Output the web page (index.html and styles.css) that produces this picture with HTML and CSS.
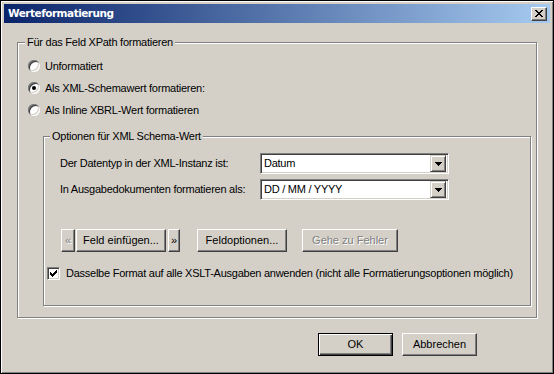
FILE: index.html
```html
<!DOCTYPE html>
<html lang="de">
<head>
    <meta charset="UTF-8">
    <title>Werteformatierung</title>
    <link rel="stylesheet" href="styles.css">
</head>
<body>
    <div class="window">
        <div class="titlebar">
            <span class="title">Werteformatierung</span>
            <button class="close-btn" type="button">
                <svg width="8" height="7" viewBox="0 0 8 7"><path d="M0 0h2v1H0z M6 0h2v1H6z M1 1h2v1H1z M5 1h2v1H5z M2 2h4v1H2z M3 3h2v1H3z M2 4h4v1H2z M1 5h2v1H1z M5 5h2v1H5z M0 6h2v1H0z M6 6h2v1H6z" fill="#000"/></svg>
            </button>
        </div>
        <div class="content">
            <fieldset class="group outer">
                <legend>Für das Feld XPath formatieren</legend>
                <div class="outer-body">
                    <label class="radio-row"><span class="radio"></span>Unformatiert</label>
                    <label class="radio-row"><span class="radio checked"></span>Als XML-Schemawert formatieren:</label>
                    <label class="radio-row"><span class="radio"></span>Als Inline XBRL-Wert formatieren</label>

                    <fieldset class="group inner">
                        <legend>Optionen für XML Schema-Wert</legend>
                        <div class="inner-body">
                            <div class="fields">
                                <label>Der Datentyp in der XML-Instanz ist:</label>
                                <div class="combo">
                                    <span class="combo-text">Datum</span>
                                    <span class="drop"><svg width="7" height="4" viewBox="0 0 7 4"><path d="M0 0h7v1H0z M1 1h5v1H1z M2 2h3v1H2z M3 3h1v1H3z" fill="#000"/></svg></span>
                                </div>
                                <label>In Ausgabedokumenten formatieren als:</label>
                                <div class="combo">
                                    <span class="combo-text">DD / MM / YYYY</span>
                                    <span class="drop"><svg width="7" height="4" viewBox="0 0 7 4"><path d="M0 0h7v1H0z M1 1h5v1H1z M2 2h3v1H2z M3 3h1v1H3z" fill="#000"/></svg></span>
                                </div>
                            </div>

                            <div class="toolbar">
                                <button class="btn btn-prev" type="button" disabled>«</button>
                                <button class="btn btn-insert" type="button">Feld einfügen...</button>
                                <button class="btn btn-next" type="button">»</button>
                                <button class="btn btn-options" type="button">Feldoptionen...</button>
                                <button class="btn btn-error" type="button" disabled>Gehe zu Fehler</button>
                            </div>

                            <label class="check-row">
                                <span class="checkbox"><svg width="7" height="7" viewBox="0 0 7 7"><path d="M6 0h1v1h-1z M5 1h2v1h-2z M0 2h1v1H0z M4 2h3v1H4z M0 3h2v1H0z M3 3h3v1H3z M0 4h5v1H0z M1 5h3v1H1z M2 6h1v1H2z" fill="#000"/></svg></span>
                                Dasselbe Format auf alle XSLT-Ausgaben anwenden (nicht alle Formatierungsoptionen möglich)
                            </label>
                        </div>
                    </fieldset>
                </div>
            </fieldset>

            <div class="actions">
                <button class="btn btn-default" type="button">OK</button>
                <button class="btn" type="button">Abbrechen</button>
            </div>
        </div>
    </div>
</body>
</html>
```

FILE: styles.css
```css
body {
    margin: 0;
    background-color: #d4d0c8;
    color: #000;
    font-family: "Liberation Sans", Arial, sans-serif;
    font-size: 11px;
    line-height: 13px;
    letter-spacing: -0.25px;
}
.window {
    box-sizing: border-box;
    width: 554px;
    height: 374px;
    border: 1px solid #000;
    box-shadow: inset 1px 1px #fff, inset -1px -1px #808080;
    padding: 3px;
    display: flex;
    flex-direction: column;
}
.titlebar {
    height: 19px;
    display: flex;
    align-items: center;
    justify-content: space-between;
    padding: 0 3px 0 4px;
    background: linear-gradient(to right, #0a246a, #a6caf0);
}
.title {
    color: #fff;
    font-family: "DejaVu Sans", sans-serif;
    font-weight: bold;
    font-size: 10.5px;
    letter-spacing: -0.5px;
}
.close-btn {
    box-sizing: border-box;
    width: 16px;
    height: 14px;
    padding: 0;
    border: 1px solid;
    border-color: #fff #404040 #404040 #fff;
    box-shadow: inset -1px -1px #808080;
    background-color: #d4d0c8;
    display: flex;
    align-items: center;
    justify-content: center;
}
.content {
    flex: 1;
    display: flex;
    flex-direction: column;
    padding: 13px 13px 0 13px;
}

/* etched group boxes */
.group {
    margin: 0;
    padding: 0;
    min-width: 0;
    border: 1px solid #808080;
    box-shadow: 1px 1px 0 #fff, inset 1px 1px 0 #fff;
}
.group > legend {
    padding: 0 2px;
    background-color: #d4d0c8;
}
.outer > legend {
    margin-left: 7px;
}
.inner > legend {
    margin-left: 6px;
}
.outer-body {
    padding: 6px 5px 11px 10px;
}
.inner {
    margin: 9px 0 0 15px;
}
.inner-body {
    padding: 10px 0 25px 0;
}

/* radios */
.radio-row {
    display: flex;
    align-items: center;
    gap: 5px;
    height: 22px;
}
.radio {
    width: 12px;
    height: 12px;
    border-radius: 50%;
    background-color: #fff;
    box-shadow: inset 1px 1px #808080, inset -1px -1px #fff, inset 2px 2px #404040, inset -2px -2px #d4d0c8;
    display: flex;
    align-items: center;
    justify-content: center;
}
.radio.checked::after {
    content: "";
    width: 4px;
    height: 4px;
    border-radius: 50%;
    background-color: #000;
}

/* fields */
.fields {
    display: grid;
    grid-template-columns: 200px 189px;
    row-gap: 5px;
    align-items: center;
    padding-left: 16px;
}
.combo {
    box-sizing: border-box;
    height: 21px;
    padding: 2px;
    display: flex;
    align-items: center;
    border: 1px solid;
    border-color: #808080 #fff #fff #808080;
    box-shadow: inset 1px 1px #404040, inset -1px -1px #d4d0c8;
    background-color: #fff;
}
.combo-text {
    padding-left: 1px;
}
.drop {
    box-sizing: border-box;
    margin-left: auto;
    width: 16px;
    height: 17px;
    border: 1px solid;
    border-color: #d4d0c8 #404040 #404040 #d4d0c8;
    box-shadow: inset 1px 1px #fff, inset -1px -1px #808080;
    background-color: #d4d0c8;
    display: flex;
    align-items: center;
    justify-content: center;
}

/* buttons */
.btn {
    box-sizing: border-box;
    height: 23px;
    width: 75px;
    padding: 0;
    font: inherit;
    color: #000;
    border: 1px solid;
    border-color: #fff #404040 #404040 #fff;
    box-shadow: inset -1px -1px #808080;
    background-color: #d4d0c8;
}
.btn:disabled {
    color: #808080;
    text-shadow: 1px 1px #fff;
}
.btn-default {
    border: 1px solid #000;
    box-shadow: inset 1px 1px #fff, inset -1px -1px #404040, inset -2px -2px #808080;
}
.toolbar {
    display: flex;
    margin: 29px 0 0 17px;
}
.btn-prev {
    width: 14px;
}
.btn-insert {
    width: 90px;
    margin-left: 1px;
}
.btn-next {
    width: 12px;
    margin-left: 2px;
}
.btn-options {
    width: 90px;
    margin-left: 17px;
}
.btn-error {
    width: 96px;
    margin-left: 15px;
}

/* checkbox */
.check-row {
    display: flex;
    align-items: center;
    gap: 6px;
    margin: 15px 0 0 3px;
    height: 13px;
    white-space: nowrap;
}
.checkbox {
    box-sizing: border-box;
    width: 13px;
    height: 13px;
    border: 1px solid;
    border-color: #808080 #fff #fff #808080;
    box-shadow: inset 1px 1px #404040, inset -1px -1px #d4d0c8;
    background-color: #fff;
    display: flex;
    align-items: center;
    justify-content: center;
}

.actions {
    display: flex;
    justify-content: flex-end;
    gap: 9px;
    margin: 15px 60px 0 0;
}
```
